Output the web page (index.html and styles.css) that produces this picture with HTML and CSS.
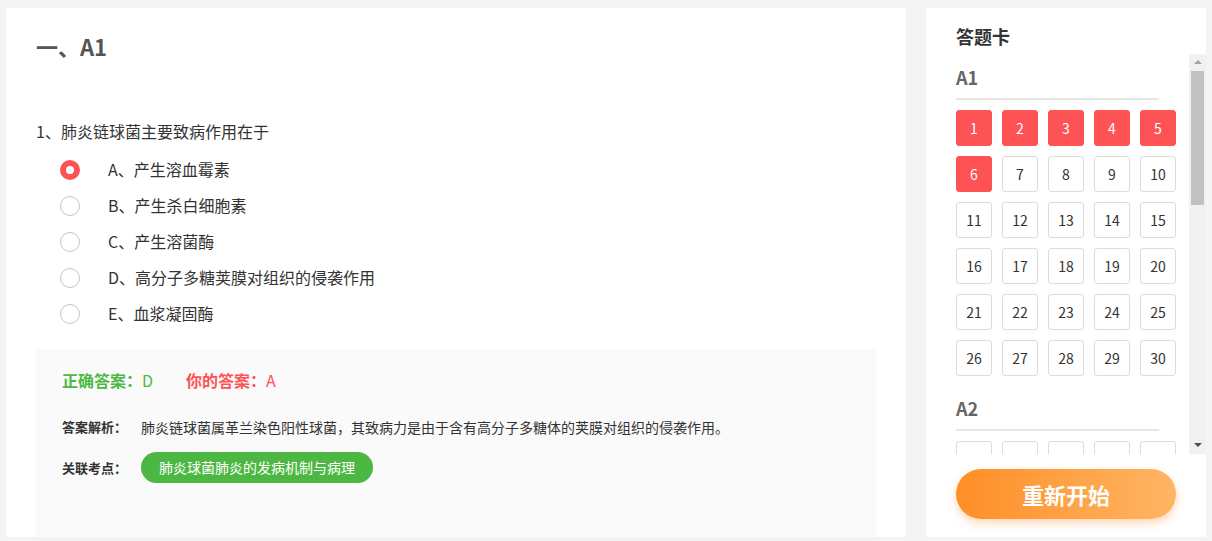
FILE: index.html
```html
<!DOCTYPE html>
<html lang="zh-CN">
<head>
<meta charset="utf-8">
<title>答题</title>
<link rel="stylesheet" href="styles.css">
</head>
<body>
<div class="page">
  <main class="paper">
    <h1 class="part-title">一、A1</h1>
    <div class="question">
      <p class="stem">1、肺炎链球菌主要致病作用在于</p>
      <ul class="options">
        <li class="option"><span class="radio checked"></span><span>A、产生溶血霉素</span></li>
        <li class="option"><span class="radio"></span><span>B、产生杀白细胞素</span></li>
        <li class="option"><span class="radio"></span><span>C、产生溶菌酶</span></li>
        <li class="option"><span class="radio"></span><span>D、高分子多糖荚膜对组织的侵袭作用</span></li>
        <li class="option"><span class="radio"></span><span>E、血浆凝固酶</span></li>
      </ul>
      <div class="analysis">
        <div class="answers">
          <span class="right-ans"><b>正确答案：</b>D</span>
          <span class="my-ans"><b>你的答案：</b>A</span>
        </div>
        <div class="row explain">
          <span class="label">答案解析：</span>
          <span class="text">肺炎链球菌属革兰染色阳性球菌，其致病力是由于含有高分子多糖体的荚膜对组织的侵袭作用。</span>
        </div>
        <div class="row point">
          <span class="label">关联考点：</span>
          <span class="tag">肺炎球菌肺炎的发病机制与病理</span>
        </div>
      </div>
    </div>
  </main>
  <aside class="card">
    <h2 class="card-title">答题卡</h2>
    <div class="scroller">
      <section class="group">
        <h3 class="group-title">A1</h3>
        <div class="cells">
          <span class="cell done">1</span><span class="cell done">2</span><span class="cell done">3</span><span class="cell done">4</span><span class="cell done">5</span>
          <span class="cell done">6</span><span class="cell">7</span><span class="cell">8</span><span class="cell">9</span><span class="cell">10</span>
          <span class="cell">11</span><span class="cell">12</span><span class="cell">13</span><span class="cell">14</span><span class="cell">15</span>
          <span class="cell">16</span><span class="cell">17</span><span class="cell">18</span><span class="cell">19</span><span class="cell">20</span>
          <span class="cell">21</span><span class="cell">22</span><span class="cell">23</span><span class="cell">24</span><span class="cell">25</span>
          <span class="cell">26</span><span class="cell">27</span><span class="cell">28</span><span class="cell">29</span><span class="cell">30</span>
        </div>
      </section>
      <section class="group">
        <h3 class="group-title">A2</h3>
        <div class="cells">
          <span class="cell">1</span><span class="cell">2</span><span class="cell">3</span><span class="cell">4</span><span class="cell">5</span>
        </div>
      </section>
      <div class="scrollbar">
        <span class="arrow up"></span>
        <span class="thumb"></span>
        <span class="arrow down"></span>
      </div>
    </div>
    <button class="restart">重新开始</button>
  </aside>
</div>
</body>
</html>
```
FILE: styles.css
```css
* { box-sizing: border-box; }
html, body { margin: 0; padding: 0; }
body {
  background: #f4f4f4;
  font-family: "Noto Sans CJK SC", "Noto Sans", sans-serif;
  color: #333;
  width: 1212px;
  height: 541px;
  overflow: hidden;
}
.page {
  display: flex;
  gap: 20px;
  padding: 8px 6px 0 6px;
}
.paper {
  width: 900px;
  height: 529px;
  background: #fff;
  padding: 22px 30px 0 30px;
  overflow: hidden;
}
.part-title {
  margin: 0;
  font-size: 22px;
  line-height: 32px;
  font-weight: 700;
  color: #555;
}
.question { margin-top: 57px; }
.stem {
  margin: 0;
  font-size: 16px;
  line-height: 24px;
  color: #333;
}
.options {
  list-style: none;
  margin: 9px 0 0 0;
  padding: 0 0 0 24px;
}
.option {
  display: flex;
  align-items: center;
  gap: 28px;
  height: 36px;
  font-size: 16px;
  line-height: 22px;
  color: #333;
}
.option span:last-child { margin-top: -2px; }
.radio {
  width: 20px;
  height: 20px;
  border-radius: 50%;
  border: 1px solid #c4c4c4;
  background: #fff;
  flex: none;
}
.radio.checked {
  border: 6px solid #fd5355;
}
.analysis {
  margin-top: 17px;
  background: #fafafa;
  height: 200px;
  padding: 19px 26px;
}
.answers {
  display: flex;
  gap: 33px;
  font-size: 16px;
  line-height: 24px;
}
.answers b { font-weight: 700; }
.right-ans { color: #4cb944; }
.my-ans { color: #fd5355; }
.row {
  display: flex;
  align-items: center;
  font-size: 14px;
}
.label {
  width: 79px;
  flex: none;
  font-size: 13px;
  font-weight: 700;
  color: #333;
}
.explain { margin-top: 25px; line-height: 20px; }
.explain .text { color: #333; }
.point { margin-top: 15px; }
.tag {
  display: inline-block;
  background: #4cb843;
  color: #fff;
  border-radius: 16px;
  height: 31px;
  line-height: 31px;
  padding: 0 18px;
  font-size: 14px;
}
.card {
  width: 280px;
  height: 529px;
  background: #fff;
  padding-top: 16px;
  overflow: hidden;
  display: flex;
  flex-direction: column;
}
.card-title {
  margin: 0 0 4px 30px;
  font-size: 18px;
  line-height: 24px;
  font-weight: 700;
  color: #333;
  padding-bottom: 2px;
}
.scroller {
  position: relative;
  height: 400px;
  overflow: hidden;
  padding-left: 30px;
}
.group { padding-top: 11px; }
.group-title {
  margin: 0;
  width: 203px;
  font-size: 18px;
  line-height: 24px;
  font-weight: 700;
  color: #666;
  padding-bottom: 9px;
  border-bottom: 2px solid #e6e6e6;
}
.cells {
  display: grid;
  grid-template-columns: repeat(5, 36px);
  gap: 10px;
  margin: 10px 0 9px 0;
}
.cell {
  width: 36px;
  height: 36px;
  border: 1px solid #dcdcdc;
  border-radius: 3px;
  text-align: center;
  line-height: 34px;
  font-size: 14px;
  color: #333;
}
.cell.done {
  background: #fd5355;
  border-color: #fd5355;
  color: #fff;
}
.scrollbar {
  position: absolute;
  top: 0;
  right: 0;
  bottom: 0;
  width: 17px;
  background: #f1f1f1;
  display: flex;
  flex-direction: column;
  align-items: center;
}
.arrow {
  width: 0;
  height: 0;
  border-left: 4px solid transparent;
  border-right: 4px solid transparent;
}
.arrow.up {
  margin-top: 6px;
  border-bottom: 4px solid #a3a3a3;
}
.thumb {
  margin-top: 7px;
  width: 13px;
  height: 134px;
  background: #c1c1c1;
}
.arrow.down {
  margin-top: auto;
  margin-bottom: 7px;
  border-top: 4px solid #505050;
}
.restart {
  margin: 15px 0 0 30px;
  width: 220px;
  height: 50px;
  border: none;
  border-radius: 25px;
  background: linear-gradient(90deg, #ff8e27 0%, #ffb564 100%);
  box-shadow: 0 4px 10px rgba(255, 140, 40, 0.35);
  color: #fff;
  font-family: "Noto Sans CJK SC", sans-serif;
  font-size: 22px;
  font-weight: 700;
  padding: 0;
}
```
